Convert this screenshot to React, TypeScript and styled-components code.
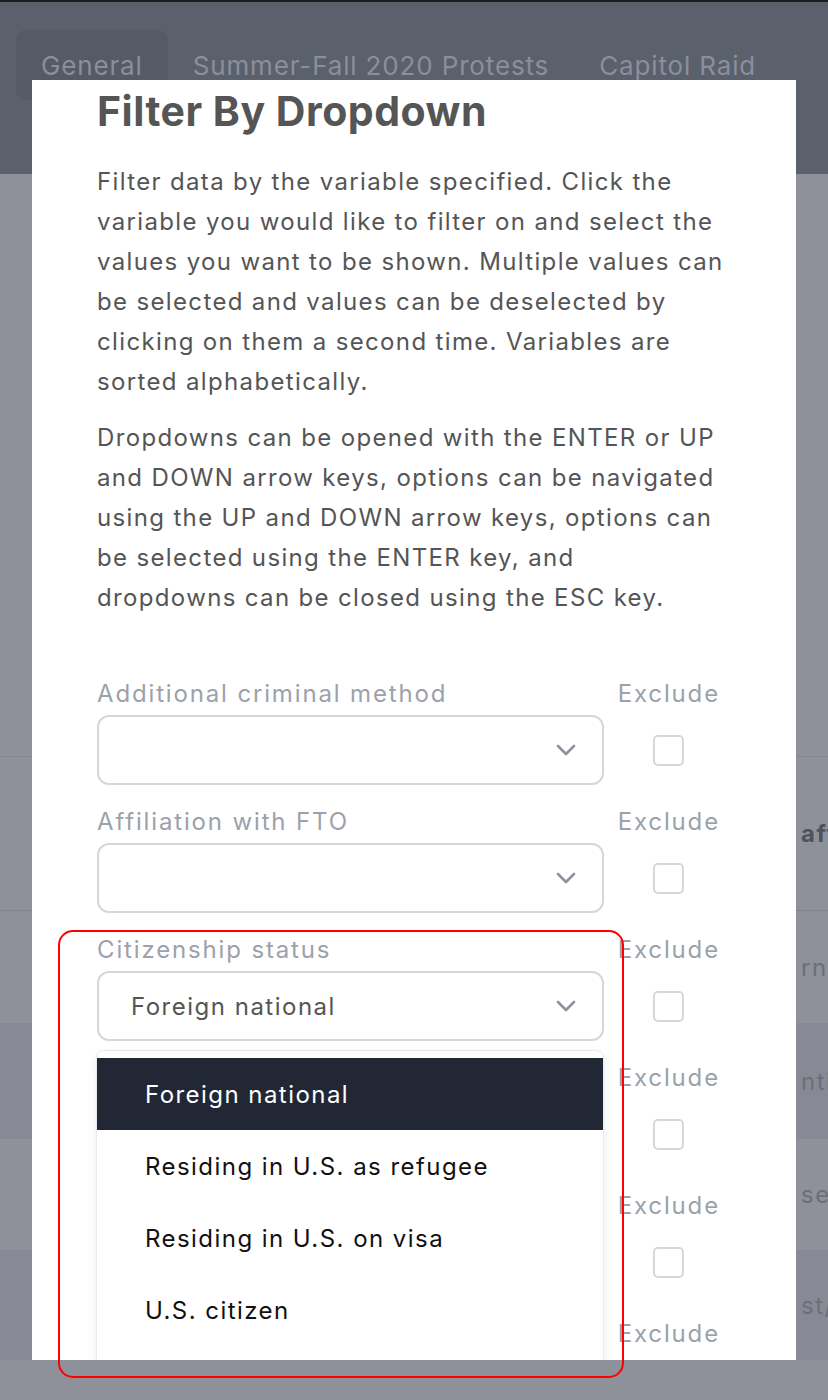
import { Fragment } from "react";
import styled, { createGlobalStyle } from "styled-components";

const GlobalStyle = createGlobalStyle`
  html, body {
    margin: 0;
    padding: 0;
    background: #8b8e97;
  }
  body {
    font-family: Inter, "Noto Sans", "Liberation Sans", sans-serif;
    overflow: hidden;
  }
  * {
    box-sizing: border-box;
  }
`;

const Page = styled.div`
  position: relative;
  width: 828px;
  height: 1400px;
  overflow: hidden;
  background: #8b8e97;
`;

const TopBar = styled.header`
  height: 174px;
  border-top: 2px solid #1c1c1e;
  background: #5b606d;
  padding: 28px 16px 0;
`;

const Tabs = styled.nav`
  display: flex;
`;

const Tab = styled.div<{ $active?: boolean }>`
  height: 70px;
  padding: 0 25px;
  display: flex;
  align-items: center;
  font-size: 26px;
  letter-spacing: 0.85px;
  color: #8b8f9a;
  white-space: nowrap;
  border-radius: 10px;
  background: ${(p) => (p.$active ? "#555a66" : "transparent")};
`;

const Body = styled.main`
  padding-top: 582px;
  background: #8e919a;
`;

const Table = styled.div`
  display: flex;
  flex-direction: column;
`;

const Row = styled.div<{ $height: number; $striped?: boolean; $head?: boolean }>`
  height: ${(p) => p.$height}px;
  display: grid;
  grid-template-columns: 799px 1fr;
  align-items: center;
  background: ${(p) => (p.$striped ? "#878a94" : "#8e919a")};
  border-top: ${(p) => (p.$head ? "1px solid #858891" : "none")};
  border-bottom: ${(p) => (p.$head ? "1px solid #80838c" : "none")};
  font-size: 24px;
  font-weight: ${(p) => (p.$head ? 700 : 400)};
  color: ${(p) => (p.$head ? "#4f535d" : "#6b6f79")};
  letter-spacing: 1.5px;
  white-space: nowrap;
`;

const Cell = styled.div`
  padding-left: 48px;
  overflow: hidden;
`;

const EdgeCell = styled.div`
  padding-left: 2px;
  overflow: hidden;
`;

const Modal = styled.section`
  position: absolute;
  top: 80px;
  left: 32px;
  width: 764px;
  height: 1280px;
  background: #fff;
  overflow: hidden;
  padding: 7px 40px 0 65px;
`;

const Title = styled.h2`
  margin: 0;
  font-size: 41px;
  line-height: 48px;
  font-weight: 700;
  color: #555555;
  letter-spacing: 0.5px;
`;

const Text = styled.p<{ $first?: boolean }>`
  margin: ${(p) => (p.$first ? "27px" : "16px")} 0 0;
  font-size: 24px;
  line-height: 40px;
  letter-spacing: 1.35px;
  color: #555555;
  white-space: nowrap;
`;

const Fields = styled.div`
  margin: 60px 36px 0 0;
  display: flex;
  flex-direction: column;
`;

const FilterRow = styled.div`
  display: grid;
  grid-template-columns: 1fr auto;
  column-gap: 14px;
  row-gap: 5px;
  margin-bottom: 21px;
`;

const Label = styled.div`
  font-size: 24px;
  line-height: 32px;
  letter-spacing: 1.85px;
  color: #9ca1ab;
  white-space: nowrap;
`;

const SelectWrap = styled.div`
  position: relative;
`;

const Select = styled.div`
  height: 70px;
  border: 2px solid #d5d7dc;
  border-radius: 12px;
  background: #fff;
  display: flex;
  align-items: center;
  justify-content: space-between;
  padding: 0 26px 0 32px;
  font-size: 24px;
  letter-spacing: 1.5px;
  color: #555555;
`;

const Checkbox = styled.div`
  width: 31px;
  height: 31px;
  border: 2px solid #d5d7dc;
  border-radius: 5px;
  justify-self: center;
  align-self: center;
`;

const Menu = styled.ul`
  position: absolute;
  z-index: 5;
  top: calc(100% + 9px);
  left: -1px;
  right: 0;
  margin: 0;
  padding: 7px 0;
  list-style: none;
  background: #fff;
  border: 1px solid #e9eaed;
  border-radius: 8px;
  box-shadow: 0 4px 10px rgba(17, 24, 39, 0.08);
`;

const Option = styled.li<{ $active?: boolean }>`
  height: 72px;
  display: flex;
  align-items: center;
  padding-left: 48px;
  font-size: 24px;
  letter-spacing: 1.45px;
  color: ${(p) => (p.$active ? "#ffffff" : "#111111")};
  background: ${(p) => (p.$active ? "#212735" : "transparent")};
`;

const Annotation = styled.div`
  position: absolute;
  top: 930px;
  left: 58px;
  width: 566px;
  height: 448px;
  border: 2px solid #ff0000;
  border-radius: 15px;
  pointer-events: none;
  z-index: 10;
`;

const Chevron = () => (
  <svg width="20" height="12" viewBox="0 0 20 12" fill="none">
    <polyline
      points="2,2 10,10 18,2"
      stroke="#8d929c"
      strokeWidth="2.6"
      strokeLinecap="round"
      strokeLinejoin="round"
    />
  </svg>
);

const rows = [
  { h: 155, head: true, left: "Name", right: "affiliation" },
  { h: 112, left: "Smith", right: "rnnment" },
  { h: 116, striped: true, left: "Jones", right: "ntity" },
  { h: 111, left: "Brown", right: "separatist" },
  { h: 110, striped: true, left: "Miller", right: "st/left" },
  { h: 110, left: "", right: "" },
];

const intro = [
  "Filter data by the variable specified. Click the",
  "variable you would like to filter on and select the",
  "values you want to be shown. Multiple values can",
  "be selected and values can be deselected by",
  "clicking on them a second time. Variables are",
  "sorted alphabetically.",
];

const keys = [
  "Dropdowns can be opened with the ENTER or UP",
  "and DOWN arrow keys, options can be navigated",
  "using the UP and DOWN arrow keys, options can",
  "be selected using the ENTER key, and",
  "dropdowns can be closed using the ESC key.",
];

const filters = [
  { label: "Additional criminal method", value: "" },
  { label: "Affiliation with FTO", value: "" },
  { label: "Citizenship status", value: "Foreign national", open: true },
  { label: "Criminal severity", value: "" },
  { label: "Education", value: "" },
  { label: "Employment status", value: "" },
];

const options = [
  "Foreign national",
  "Residing in U.S. as refugee",
  "Residing in U.S. on visa",
  "U.S. citizen",
  "Unknown",
];

const Lines = ({ lines }: { lines: string[] }) => (
  <>
    {lines.map((l, i) => (
      <Fragment key={i}>
        {l}
        {i < lines.length - 1 && <br />}
      </Fragment>
    ))}
  </>
);

export default function App() {
  return (
    <>
      <GlobalStyle />
      <Page>
        <TopBar>
          <Tabs>
            <Tab $active>General</Tab>
            <Tab>Summer-Fall 2020 Protests</Tab>
            <Tab>Capitol Raid</Tab>
          </Tabs>
        </TopBar>

        <Body>
          <Table>
            {rows.map((r, i) => (
              <Row key={i} $height={r.h} $head={r.head} $striped={r.striped}>
                <Cell>{r.left}</Cell>
                <EdgeCell>{r.right}</EdgeCell>
              </Row>
            ))}
          </Table>
        </Body>

        <Modal>
          <Title>Filter By Dropdown</Title>
          <Text $first>
            <Lines lines={intro} />
          </Text>
          <Text>
            <Lines lines={keys} />
          </Text>

          <Fields>
            {filters.map((f) => (
              <FilterRow key={f.label}>
                <Label>{f.label}</Label>
                <Label>Exclude</Label>
                <SelectWrap>
                  <Select>
                    <span>{f.value}</span>
                    <Chevron />
                  </Select>
                  {f.open && (
                    <Menu>
                      {options.map((o, i) => (
                        <Option key={o} $active={i === 0}>
                          {o}
                        </Option>
                      ))}
                    </Menu>
                  )}
                </SelectWrap>
                <Checkbox />
              </FilterRow>
            ))}
          </Fields>
        </Modal>

        <Annotation />
      </Page>
    </>
  );
}
